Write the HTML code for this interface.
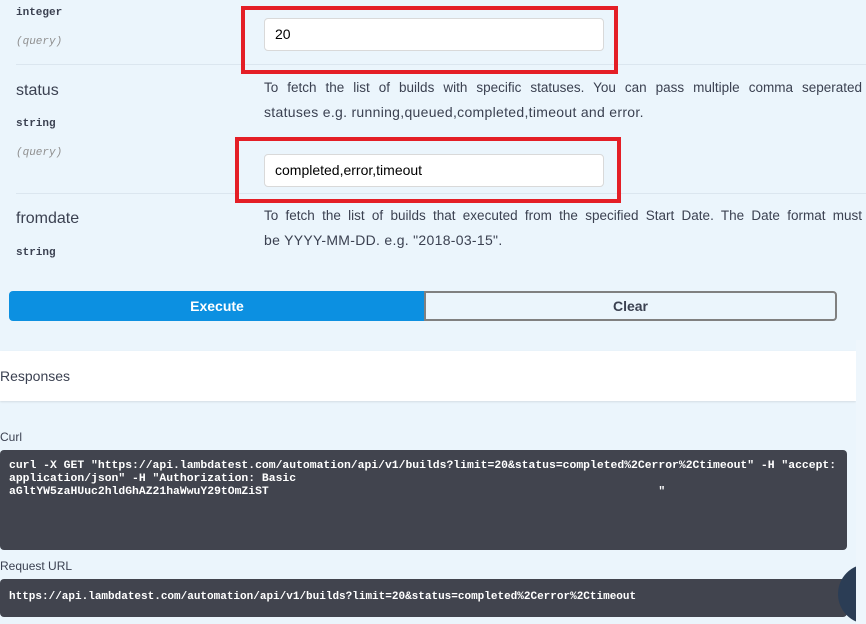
<!DOCTYPE html>
<html><head><meta charset="utf-8"><style>
*{margin:0;padding:0;box-sizing:border-box}
body{width:866px;height:624px;overflow:hidden;background:#ebf5fc;position:relative;font-family:"Liberation Sans",sans-serif;color:#3b4151}
.a{position:absolute;white-space:nowrap}
.mono{font-family:"Liberation Mono",monospace;font-weight:bold;font-size:11px;color:#3b4151}
.q{font-family:"Liberation Mono",monospace;font-style:italic;font-size:11px;color:#909090}
.name{font-size:16px;color:#3b4151}
.desc{font-family:"Liberation Sans",sans-serif;font-size:14px;letter-spacing:0.3px;color:#3b4151}
.just{width:598px;text-align:justify;text-align-last:justify;white-space:normal;letter-spacing:0;font-size:13.5px}
.line{position:absolute;left:16px;right:0;height:1px;background:#dbe6ef}
.inp{position:absolute;background:#fff;border:1px solid #d9d9d9;border-radius:4px;font-size:14px;padding-left:10px;line-height:31px;color:#000}
.red{position:absolute;border:4px solid #e41e26}
.code{position:absolute;background:#41444e;border-radius:4px;color:#fff;font-family:"Liberation Mono",monospace;font-weight:bold;font-size:11.1px;line-height:13px;padding:10px 9px;white-space:pre}
</style></head><body>
<div class="a mono" style="left:16px;top:7px">integer</div>
<div class="a q" style="left:16px;top:36px">(query)</div>
<div class="line" style="top:64px"></div>
<div class="inp" style="left:264px;top:18px;width:340px;height:33px">20</div>
<div class="red" style="left:241px;top:6px;width:377px;height:68px"></div>

<div class="a name" style="left:16px;top:82px">status</div>
<div class="a mono" style="left:16px;top:118px">string</div>
<div class="a q" style="left:16px;top:147px">(query)</div>
<div class="a desc just" style="left:264px;top:80px">To fetch the list of builds with specific statuses. You can pass multiple comma seperated</div>
<div class="a desc" style="left:264px;top:104px">statuses e.g. running,queued,completed,timeout and error.</div>
<div class="line" style="top:193px"></div>
<div class="inp" style="left:264px;top:154px;width:340px;height:33px">completed,error,timeout</div>
<div class="red" style="left:235px;top:137px;width:386px;height:66px"></div>

<div class="a name" style="left:16px;top:210px">fromdate</div>
<div class="a mono" style="left:16px;top:247px">string</div>
<div class="a desc just" style="left:264px;top:208px">To fetch the list of builds that executed from the specified Start Date. The Date format must</div>
<div class="a desc" style="left:264px;top:232px">be YYYY-MM-DD. e.g. "2018-03-15".</div>

<div class="a" style="left:9px;top:291px;width:416px;height:30px;background:#0c90e1;border-radius:4px 0 0 4px;color:#fff;font-weight:bold;font-size:14px;text-align:center;line-height:30px">Execute</div>
<div class="a" style="left:424px;top:291px;width:413px;height:30px;border:2px solid #808080;border-radius:0 4px 4px 0;color:#3b4151;font-weight:bold;font-size:14px;text-align:center;line-height:26px">Clear</div>

<div class="a" style="left:0;top:351px;width:856px;height:50px;background:#fff;box-shadow:0 1px 2px rgba(0,0,0,.1)"></div>
<div class="a" style="left:0;top:368px;font-size:14px;color:#3b4151">Responses</div>

<div class="a" style="left:0;top:430px;font-size:12px;color:#3b4151">Curl</div>
<div class="code" style="left:0;top:450px;width:847px;height:100px;font-size:11.4px">curl -X GET "https://api.lambdatest.com/automation/api/v1/builds?limit=20&amp;status=completed%2Cerror%2Ctimeout" -H "accept:
application/json" -H "Authorization: Basic
aGltYW5zaHUuc2hldGhAZ21haWwuY29tOmZiST                                                         "</div>
<div class="a" style="left:0;top:559px;font-size:12px;color:#3b4151">Request URL</div>
<div class="code" style="left:0;top:579px;width:847px;height:38px;padding-top:12px;font-size:11px">https://api.lambdatest.com/automation/api/v1/builds?limit=20&amp;status=completed%2Cerror%2Ctimeout</div>

<div class="a" style="left:838px;top:564px;width:60px;height:60px;border-radius:50%;background:#2b3d55"></div>
<div class="a" style="left:856px;top:340px;width:10px;height:284px;background:#eef6fc"></div>
</body></html>
